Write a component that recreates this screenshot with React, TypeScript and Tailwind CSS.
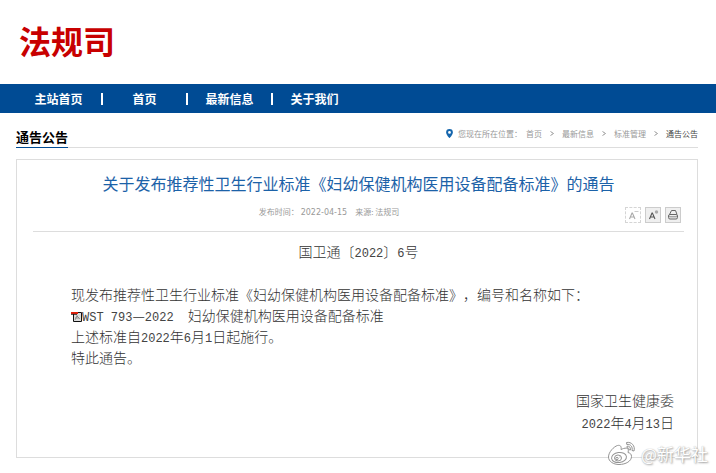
import { ReactNode } from "react";

const navItems = ["主站首页", "首页", "最新信息", "关于我们"];

const crumbs = ["首页", "最新信息", "标准管理", "通告公告"];

// digits and latin letters take half the width of a chinese character
function Half({ children }: { children: ReactNode }) {
  return (
    <span className="font-['Liberation_Mono'] text-[12px] leading-none text-[#444]">
      {children}
    </span>
  );
}

function PinIcon() {
  return (
    <svg className="mr-[5px] h-[9px] w-[7px]" viewBox="0 0 7 9" aria-hidden>
      <path
        fill="#1566ad"
        fillRule="evenodd"
        d="M3.5 0A3.4 3.4 0 0 0 .1 3.4C.1 5.6 3.5 9 3.5 9s3.4-3.4 3.4-5.6A3.4 3.4 0 0 0 3.5 0Zm0 2a1.4 1.4 0 1 1 0 2.8 1.4 1.4 0 0 1 0-2.8Z"
      />
    </svg>
  );
}

function PdfIcon() {
  return (
    <svg
      className="inline-block h-[11px] w-[11px] align-[-1px]"
      viewBox="0 0 11 11"
      aria-hidden
    >
      <path fill="#ddd" stroke="#111" d="M2.5 1.5h8v9h-8z" />
      <path
        stroke="#777"
        strokeWidth=".7"
        fill="none"
        d="M4 9l2-4 3 3M4 7h4M6 4v2"
      />
      <path fill="#e1200c" d="M0 1h7v2H0z" />
      <path stroke="#111" strokeWidth=".8" d="M0 3.4h6" />
    </svg>
  );
}

function LetterIcon({ color, plus }: { color: string; plus?: boolean }) {
  return (
    <svg className="h-[14px] w-[14px]" viewBox="0 0 14 14" aria-hidden>
      <path
        fill="none"
        stroke={color}
        strokeWidth="1.1"
        d="M3.5 11 6 5h.4L9 11M4.5 9h3.5"
      />
      {plus ? (
        <circle cx="10.5" cy="4" r="1.7" fill="#aaa" />
      ) : (
        <path stroke="#ccc" d="M8.5 3.5h4" />
      )}
    </svg>
  );
}

function PrintIcon() {
  return (
    <svg
      className="h-[14px] w-[14px]"
      viewBox="0 0 14 14"
      fill="none"
      stroke="#666"
      aria-hidden
    >
      <path d="M3.5 6.5 5.5 2.5h4l1.500 4" />
      <rect x="2.5" y="6.500" width="9" height="4.500" rx="1.500" />
      <path stroke="#888" d="M3 8.800h8" />
    </svg>
  );
}

function WeiboIcon() {
  return (
    <svg
      className="h-[25px] w-[30px]"
      viewBox="0 0 30 25"
      fill="none"
      stroke="#949494"
      strokeWidth="1"
      aria-hidden
    >
      <path
        fill="#fff"
        d="M10.5 4.5C7 5.5 1.5 11 1.5 16c0 4.5 5 7.5 10.500 7.500 7 0 12.500-3.500 12.500-8 0-2.500-1.500-3.500-3.500-4 .8-2.500.3-4-1.500-4.300-1.800-.3-4 .6-5.500 1.300.6-3-.5-4.700-3.500-4Z"
      />
      <ellipse
        cx="12"
        cy="16.5"
        rx="7.5"
        ry="5"
        transform="rotate(-8 12 16.5)"
      />
      <ellipse cx="11" cy="17" rx="3.5" ry="3" />
      <circle cx="10" cy="17.5" r="1.2" />
      <path d="M12.5 16h.8" />
      <path d="M19.5 1.5c5-1 9 3.5 7.5 8.500l-2-.5c1-3.500-1.500-6.800-5.200-6ZM20 5.200c2.500-.4 4 1.500 3.400 3.800l-1.600-.4c.3-1.200-.3-2-1.600-1.700Z" />
    </svg>
  );
}

export default function App() {
  return (
    <div className="bg-white font-['Noto_Sans_CJK_SC',sans-serif] text-[#333] [text-spacing-trim:space-all]">
      <header className="flex h-[84px] items-center pb-[5px] pl-[19px]">
        <h1 className="text-[32px] leading-10 font-bold text-[#c80000]">
          法规司
        </h1>
      </header>

      <nav className="flex h-[29px] items-center bg-[#004b94] pl-4">
        {navItems.map((item, i) => (
          <a
            key={item}
            href="#"
            className={`w-[85px] text-center text-[12px] leading-3 font-bold text-white ${
              i > 0 ? "border-l-2 border-white" : ""
            }`}
          >
            {item}
          </a>
        ))}
      </nav>

      <main className="mr-[18px] ml-4 pb-[15px]">
        <div className="flex h-[35px] items-end justify-between border-b border-[#ddd]">
          <h2 className="-mb-px border-b border-[#004b94] text-[13px] leading-[21px] font-bold text-black">
            通告公告
          </h2>
          <div className="flex h-6 items-center pb-[3px] text-[8px] leading-3 text-[#999]">
            <PinIcon />
            <span className="mr-1">您现在所在位置：</span>
            {crumbs.map((crumb, i) => (
              <span key={crumb} className="flex items-center">
                {i > 0 && (
                  <svg
                    className="mx-2 h-[5px] w-1"
                    viewBox="0 0 4 5"
                    fill="none"
                    stroke="#999"
                    aria-hidden
                  >
                    <path d="M.5.5l3 2-3 2" />
                  </svg>
                )}
                <a
                  href="#"
                  className={i === crumbs.length - 1 ? "text-[#444]" : ""}
                >
                  {crumb}
                </a>
              </span>
            ))}
          </div>
        </div>

        <article className="mt-[11px] border border-[#ddd] pr-[13px] pb-6 pl-4">
          <h3 className="pt-[11px] text-center text-[16px] leading-6 text-[#1c62a8]">
            关于发布推荐性卫生行业标准《妇幼保健机构医用设备配备标准》的通告
          </h3>
          <div className="flex h-[37px] items-start border-b border-[#ddd]">
            <div className="flex flex-1 justify-center gap-2 pt-[9px] text-[8px] leading-4 text-[#999]">
              <span>
                发布时间：{" "}
                <span className="font-['DejaVu_Sans']">2022-04-15</span>
              </span>
              <span>来源: 法规司</span>
            </div>
            <div className="flex gap-1 pt-3 pr-[3px]">
              <button
                aria-label="缩小字体"
                className="flex h-4 w-4 items-center justify-center border border-dashed border-[#d5d5d5]"
              >
                <LetterIcon color="#aaa" />
              </button>
              <button
                aria-label="放大字体"
                className="flex h-4 w-4 items-center justify-center border border-[#ccc] bg-[#efefef]"
              >
                <LetterIcon color="#555" plus />
              </button>
              <button
                aria-label="打印"
                className="flex h-4 w-4 items-center justify-center border border-[#ccc] bg-[#efefef]"
              >
                <PrintIcon />
              </button>
            </div>
          </div>

          <p className="pt-2 text-center text-[14px] leading-[22px] font-light">
            国卫通〔<Half>2022</Half>〕<Half>6</Half>号
          </p>

          <div className="mt-[22px] pl-[38px] text-[14px] leading-[21px] font-light whitespace-nowrap">
            <p>
              现发布推荐性卫生行业标准《妇幼保健机构医用设备配备标准》，编号和名称如下：
            </p>
            <p>
              <PdfIcon />
              <a href="#">
                <Half>WST 793</Half>—<Half>2022</Half>
                {"　"}妇幼保健机构医用设备配备标准
              </a>
            </p>
            <p>
              上述标准自<Half>2022</Half>年<Half>6</Half>月<Half>1</Half>
              日起施行。
            </p>
            <p>特此通告。</p>
          </div>

          <div className="mt-[21px] pr-[10px] text-right text-[14px] leading-[22px] font-light">
            <p>国家卫生健康委</p>
            <p>
              <Half>2022</Half>年<Half>4</Half>月<Half>13</Half>日
            </p>
          </div>
        </article>
      </main>

      <div className="absolute top-[441px] right-2 flex items-center gap-1">
        <WeiboIcon />
        <span className="text-[17px] leading-6 text-white [text-shadow:0_0_1px_#aaa,1px_1px_2px_#999]">
          @新华社
        </span>
      </div>
    </div>
  );
}
